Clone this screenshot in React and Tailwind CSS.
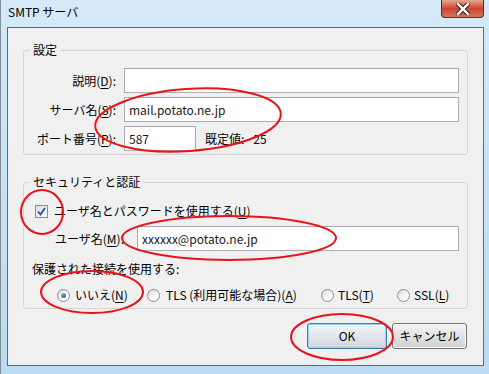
import { useState } from "react";

const font = { fontFamily: '"Noto Sans CJK JP", "Noto Sans", sans-serif' };

const Mn = ({ children }) => <span className="underline underline-offset-2">{children}</span>;

const Radio = ({ checked }) => (
  <span className="relative inline-flex items-center justify-center w-[13px] h-[13px] rounded-full border border-[#8f8f8f] bg-gradient-to-br from-[#d8d8d8] via-[#f6f6f6] to-[#ffffff] shrink-0">
    {checked && (
      <span className="w-[5px] h-[5px] rounded-full bg-gradient-to-br from-[#7fd0f2] to-[#0b5c8e]" />
    )}
  </span>
);

const Button = ({ children, isDefault }) => (
  <div
    className={`h-[26px] flex items-center justify-center rounded-[3px] border text-[12px] text-black ${
      isDefault
        ? "w-[80px] border-[#3c7fb1] bg-gradient-to-b from-[#eef4f8] via-[#e2e8ec] to-[#cfd5d9] shadow-[inset_0_0_0_1px_#8fd3f5]"
        : "w-[75px] border-[#707070] bg-gradient-to-b from-[#f2f2f2] via-[#e4e4e4] to-[#cfcfcf] shadow-[inset_0_0_0_1px_#fcfcfc]"
    }`}
  >
    {children}
  </div>
);

const Field = ({ value, className = "" }) => (
  <div className={`h-[25px] border border-[#abadb3] border-t-[#a3a6ad] bg-white flex items-center px-[4px] text-[12px] text-[#1a1a1a] ${className}`}>
    {value}
  </div>
);

export default function App() {
  const [useAuth] = useState(true);

  return (
    <div
      className="relative w-[489px] h-[374px] overflow-hidden bg-gradient-to-b from-[#d4eaf9] via-[#c6e2f5] to-[#b9dcf2] border-l border-[#7f8c99] text-black"
      style={font}
    >
      {/* title bar */}
      <div className="h-[27px] flex items-start justify-between">
        <span className="pl-[7px] pt-[4px] text-[12px] leading-[16px]">SMTP サーバ</span>
        <div className="mr-[5px] w-[43px] h-[18px] rounded-b-[4px] border border-t-0 border-[#5a2a22] bg-gradient-to-b from-[#e9a493] via-[#c9452f] to-[#d4745d] flex items-center justify-center">
          <svg width="14" height="12" viewBox="0 0 14 12">
            <path d="M2 1 L12 11 M12 1 L2 11" stroke="#3a2420" strokeWidth="4.5" strokeLinecap="square" />
            <path d="M2 1 L12 11 M12 1 L2 11" stroke="#ffffff" strokeWidth="2.4" strokeLinecap="square" />
          </svg>
        </div>
      </div>

      {/* client area */}
      <div className="ml-[6px] w-[477px] h-[339px] border border-[#5d6b79] bg-[#f0f0f0] px-[15px] pt-[14px] flex flex-col text-[12px] leading-[16px]">
        <fieldset className="border border-[#d5d5d5] rounded-[3px] pb-[3px] pr-[8px]">
          <legend className="ml-[6px] px-[3px] leading-[16px]">設定</legend>
          <div className="pt-[10px] grid grid-cols-[92px_1fr] gap-x-[8px] gap-y-[4px] items-center">
            <span className="text-right">説明(<Mn>D</Mn>):</span>
            <Field value="" />
            <span className="text-right">サーバ名(<Mn>S</Mn>):</span>
            <Field value="mail.potato.ne.jp" />
            <span className="text-right">ポート番号(<Mn>P</Mn>):</span>
            <div className="flex items-center">
              <Field value="587" className="w-[72px]" />
              <span className="ml-[9px]">既定値:</span>
              <span className="ml-[9px]">25</span>
            </div>
          </div>
        </fieldset>

        <fieldset className="mt-[19px] border border-[#d5d5d5] rounded-[3px] pb-[5px] pr-[8px]">
          <legend className="ml-[6px] px-[3px] leading-[16px]">セキュリティと認証</legend>
          <div className="pt-[13px] flex flex-col">
            <div className="flex items-center h-[16px] ml-[11px]">
              <span className="w-[13px] h-[13px] border border-[#8e8f8f] bg-gradient-to-br from-[#dcdcdc] to-[#fbfbfb] flex items-center justify-center">
                {useAuth && (
                  <svg width="9" height="9" viewBox="0 0 9 9">
                    <path d="M1 4.5 L3.5 7.5 L8 1" fill="none" stroke="#2a4bb0" strokeWidth="1.8" />
                  </svg>
                )}
              </span>
              <span className="ml-[6px]">ユーザ名とパスワードを使用する(<Mn>U</Mn>)</span>
            </div>
            <div className="mt-[7px] flex items-center ml-[31px]">
              <span className="w-[82px]">ユーザ名(<Mn>M</Mn>):</span>
              <Field value="xxxxxx@potato.ne.jp" className="flex-1" />
            </div>
            <span className="mt-[10px] ml-[8px]">保護された接続を使用する:</span>
            <div className="mt-[10px] ml-[33px] flex items-center h-[16px]">
              <div className="w-[90px] flex items-center gap-[5px]">
                <Radio checked />
                <span>いいえ(<Mn>N</Mn>)</span>
              </div>
              <div className="w-[174px] flex items-center gap-[6px]">
                <Radio />
                <span>TLS (利用可能な場合)(<Mn>A</Mn>)</span>
              </div>
              <div className="w-[76px] flex items-center gap-[4px]">
                <Radio />
                <span>TLS(<Mn>T</Mn>)</span>
              </div>
              <div className="flex items-center gap-[4px]">
                <Radio />
                <span>SSL(<Mn>L</Mn>)</span>
              </div>
            </div>
          </div>
        </fieldset>

        <div className="mt-[14px] flex justify-end gap-[5px] pr-[1px]">
          <Button isDefault>OK</Button>
          <Button>キャンセル</Button>
        </div>
      </div>

      {/* red annotation ellipses */}
      <svg className="absolute inset-0 pointer-events-none" width="489" height="374" viewBox="0 0 489 374">
        <g fill="none" stroke="#e8141a" strokeWidth="2">
          <ellipse cx="187" cy="120" rx="93" ry="31" transform="rotate(-4 187 120)" />
          <ellipse cx="41" cy="212" rx="21" ry="22" />
          <ellipse cx="228" cy="238" rx="107" ry="22" />
          <ellipse cx="91" cy="292" rx="51" ry="21" />
          <ellipse cx="341" cy="337" rx="51" ry="23" />
        </g>
      </svg>
    </div>
  );
}
